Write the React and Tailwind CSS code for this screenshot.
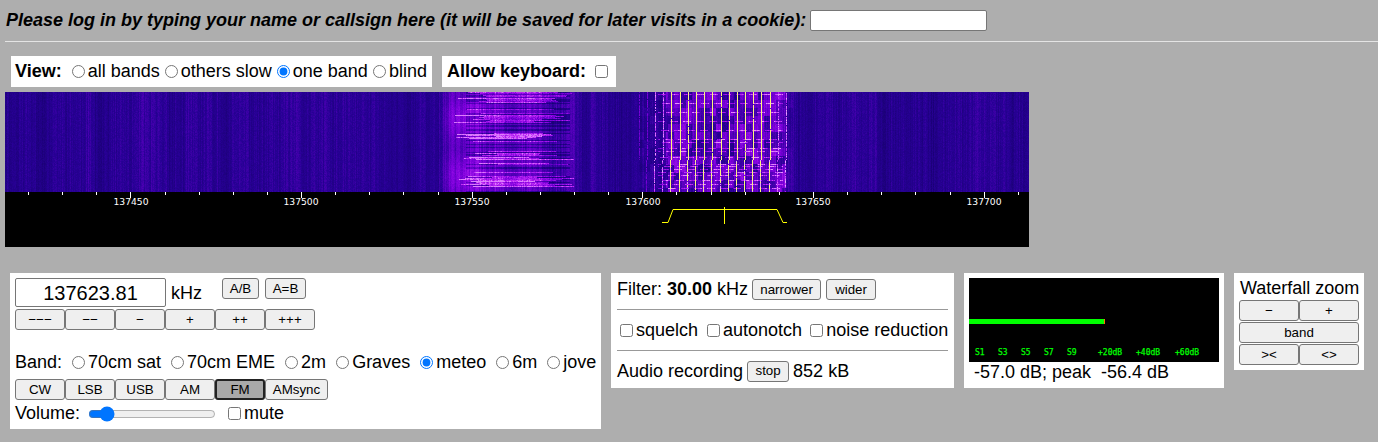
import { useEffect, useRef } from 'react'

const FONT = 'font-["Liberation_Sans",Arial,sans-serif]'

// seeded so the waterfall comes out the same on every load
function rng(seed) {
  let s = seed
  return () => {
    s = (s * 1664525 + 1013904223) >>> 0
    return s / 4294967296
  }
}

// level 0..1 -> colour, same ramp the websdr palette roughly follows
const STOPS = [
  [0, 14, 0, 90],
  [0.25, 40, 0, 150],
  [0.5, 125, 0, 220],
  [0.7, 190, 40, 245],
  [0.85, 235, 170, 255],
  [1, 255, 255, 110],
]

function colour(v) {
  const x = Math.max(0, Math.min(1, v))
  for (let i = 1; i < STOPS.length; i++) {
    if (x <= STOPS[i][0]) {
      const a = STOPS[i - 1], b = STOPS[i]
      const t = (x - a[0]) / (b[0] - a[0])
      return [a[1] + (b[1] - a[1]) * t, a[2] + (b[2] - a[2]) * t, a[3] + (b[3] - a[3]) * t]
    }
  }
  return STOPS[STOPS.length - 1].slice(1)
}

function drawWaterfall(c) {
  const W = 1024, H = 100
  const ctx = c.getContext('2d')
  const img = ctx.createImageData(W, H)
  const r = rng(11)

  // per-column gain gives the vertical streaks
  const col = []
  let drift = 0.5
  for (let x = 0; x < W; x++) {
    drift += (r() - 0.5) * 0.25 + (0.5 - drift) * 0.12
    col.push(drift * 0.7 + r() * 0.3)
  }

  // left signal: broken horizontal rows, canvas x 432..575
  const rows = []
  for (let y = 0; y < H; y++) {
    const cluster = Math.sin(y * 0.3 + 0.6) > -0.6
    rows.push({
      on: cluster && r() > 0.3,
      dark: r() > 0.55,
      a: 448 + r() * 45,
      b: 520 + r() * 50,
      v: 0.16 + r() * 0.16,
    })
  }

  // right signal: keyed carriers every 8.19px, canvas x 635..785
  const carriers = []
  for (let i = -2; i < 17; i++) carriers.push(Math.round(650 + i * 8.19))
  const lit = {}
  carriers.forEach((x, i) => {
    lit[x] = i > 3 && i < 17 ? 1 : i < 2 ? 0.45 : 0.75
  })
  const hl = []
  for (let y = 0; y < H; y++) {
    hl.push(y % 9 === 2 || (y % 9 === 5 && r() > 0.7) || (y > 68 && y % 8 === 0))
  }
  const blocks = []
  for (let i = 0; i < 120; i++) blocks.push(r())

  for (let y = 0; y < H; y++) {
    for (let x = 0; x < W; x++) {
      let v = 0.07 + col[x] * 0.26 + r() * 0.06

      if (x > 430 && x < 578) {
        const edge = Math.min(1, Math.min(x - 430, 578 - x) / 14)
        const glow = Math.max(0, 1 - Math.abs(x - 462) / 40) * (0.6 + 0.4 * Math.sin(y * 0.11 + 5))
        const row = rows[y]
        v += edge * (0.12 + 0.18 * glow + 0.08 * col[x])
        if (row.dark && x > 460 && x < 565) v -= 0.14
        if (row.on && x > row.a && x < row.b) v = Math.min(0.8, v + row.v + r() * 0.16)
      }

      if (x > 633 && x < 788) {
        const low = y > 67
        const px = low ? x + 1 : x
        const band = Math.floor((x - 633) / 6) + Math.floor(y / 8) * 13
        const centre = x > 660 && x < 780
        v += blocks[band % 120] * (centre ? 0.3 : 0.08)

        if (hl[y] && x > 652 && x < 778 && (x + y) % 13 > 4) v = Math.min(0.82, v + 0.2 + r() * 0.2)

        if (lit[px]) {
          const gap = r() > (lit[px] === 1 ? 0.97 : 0.85)
          if (!gap) {
            if (lit[px] === 1) v = low && r() > 0.75 ? 0.84 : 0.97 + r() * 0.03
            else v = Math.max(v, lit[px] * (0.85 + r() * 0.3))
          }
        }
      }

      const [R, G, B] = colour(v)
      const i = (y * W + x) * 4
      img.data[i] = R
      img.data[i + 1] = G
      img.data[i + 2] = B
      img.data[i + 3] = 255
    }
  }
  ctx.putImageData(img, 0, 0)
}

const LABELS = [
  [126, '137450'],
  [296, '137500'],
  [467, '137550'],
  [638, '137600'],
  [808, '137650'],
  [979, '137700'],
]

function Waterfall() {
  const ref = useRef(null)
  useEffect(() => {
    drawWaterfall(ref.current)
  }, [])
  const ticks = []
  for (let i = 0; i < 31; i++) ticks.push(23 + i * 34.13)
  return (
    <div className="ml-[5px] mt-[5px] w-[1024px]">
      <canvas ref={ref} width={1024} height={100} className="block" />
      <svg width="1024" height="55" className="block bg-black">
        {ticks.map((x, i) => (
          <line
            key={i}
            x1={Math.round(x) + 0.5}
            x2={Math.round(x) + 0.5}
            y1="0"
            y2={(i + 2) % 5 === 0 ? 6 : 3}
            stroke="#fff"
          />
        ))}
        {LABELS.map(([x, t]) => (
          <text key={t} x={x} y="13" textAnchor="middle" fill="#fff" fontSize="9.2" fontFamily="'DejaVu Sans',sans-serif">
            {t}
          </text>
        ))}
        <polyline
          points="657,30.5 663,30.5 668,17.5 772,17.5 778,30.5 782,30.5"
          fill="none"
          stroke="#ffff00"
        />
        <line x1="719.5" x2="719.5" y1="15" y2="32" stroke="#ffff00" />
      </svg>
    </div>
  )
}

function Btn({ className = 'bg-[#efefef] border border-[#767676]', width = '', children, ...rest }) {
  return (
    <button
      {...rest}
      className={'h-[21px] rounded-[3px] text-[13.33px] leading-none text-black text-center ' + width + ' ' + className}
    >
      {children}
    </button>
  )
}

function Radio({ label, checked, className = '' }) {
  return (
    <label className={'inline-flex items-center ' + className}>
      <input type="radio" defaultChecked={checked} className="w-[13px] h-[13px] mr-[3px]" />
      {label}
    </label>
  )
}

function Check({ label, className = '' }) {
  return (
    <label className={'inline-flex items-center ' + className}>
      <input type="checkbox" className="w-[13px] h-[13px] mr-[3px]" />
      {label}
    </label>
  )
}

const STEPS = ['−−−', '−−', '−', '+', '++', '+++']
const MODES = ['CW', 'LSB', 'USB', 'AM', 'FM']
const BANDS = ['70cm sat', '70cm EME', '2m', 'Graves', 'meteo', '6m', 'jove']

function FreqPanel() {
  return (
    <div className="w-[591px] h-[156px] bg-white px-[5px] pt-[5px]">
      <div className="flex items-start">
        <input
          type="text"
          readOnly
          value="137623.81"
          className="w-[151px] h-[29px] border border-[#767676] rounded-[2px] text-center text-[20px] text-black outline-none"
        />
        <span className="ml-[5px] mt-[4px] text-[18px] leading-[23px]">kHz</span>
        <Btn width="ml-[20px] w-[37px]">A/B</Btn>
        <Btn width="ml-[6px] w-[41px]">A=B</Btn>
      </div>
      <div className="flex mt-[2px]">
        {STEPS.map(s => (
          <Btn key={s} width="w-[50px]">{s}</Btn>
        ))}
      </div>
      <div className="flex items-center mt-[21px] h-[23px] text-[18px] whitespace-nowrap">
        <span>Band:</span>
        {BANDS.map(b => (
          <Radio key={b} label={b} checked={b === 'meteo'} className="ml-[10px]" />
        ))}
      </div>
      <div className="flex mt-[5px]">
        {MODES.map(m => (
          <Btn
            key={m}
            width="w-[50px]"
            className={m === 'FM' ? 'bg-[#a9a9a9] border-2 border-[#222]' : undefined}
          >
            {m}
          </Btn>
        ))}
        <Btn width="w-[63px]">AMsync</Btn>
      </div>
      <div className="flex items-center mt-[2px] h-[23px] text-[18px]">
        <span>Volume:</span>
        <input type="range" min="0" max="100" defaultValue="10" className="ml-[8px] w-[128px] h-[16px]" />
        <Check label="mute" className="ml-[12px]" />
      </div>
    </div>
  )
}

function FilterPanel() {
  return (
    <div className="w-[343px] h-[115px] bg-white px-[6px] pt-[5px] text-[18px]">
      <div className="flex items-center h-[23px] whitespace-pre">
        <span>Filter: <b>30.00</b> kHz</span>
        <Btn width="ml-[4px] w-[69px]">narrower</Btn>
        <Btn width="ml-[5px] w-[50px]">wider</Btn>
      </div>
      <hr className="mt-[8px] border-t border-[#999]" />
      <div className="flex items-center h-[40px] pl-[3px] whitespace-nowrap">
        <Check label="squelch" />
        <Check label="autonotch" className="ml-[9px]" />
        <Check label="noise reduction" className="ml-[8px]" />
      </div>
      <hr className="border-t border-[#999]" />
      <div className="flex items-center h-[40px] whitespace-nowrap">
        <span>Audio recording</span>
        <Btn width="ml-[4px] w-[42px]">stop</Btn>
        <span className="ml-[4px]">852 kB</span>
      </div>
    </div>
  )
}

const S_LABELS = [
  [6, 'S1'], [29, 'S3'], [52, 'S5'], [75, 'S7'], [98, 'S9'],
  [129, '+20dB'], [167, '+40dB'], [206, '+60dB'],
]

function MeterPanel() {
  return (
    <div className="w-[260px] h-[115px] bg-white pl-[5px] pt-[5px] text-[18px]">
      <svg width="250" height="84" className="block bg-black">
        <rect x="0" y="41" width="135" height="5" fill="#00ff00" />
        <rect x="135" y="41" width="1" height="5" fill="#ff6a00" />
        {S_LABELS.map(([x, t]) => (
          <text
            key={t}
            x={x}
            y="77"
            fill="#00ff00"
            stroke="#00ff00"
            strokeWidth="0.25"
            fontSize="8"
            fontFamily="'DejaVu Sans Mono',monospace"
          >
            {t}
          </text>
        ))}
      </svg>
      <div className="pl-[5px] leading-[21px] whitespace-pre">-57.0 dB; peak  -56.4 dB</div>
    </div>
  )
}

function ZoomPanel() {
  return (
    <div className="w-[130px] h-[97px] bg-white px-[5px] pt-[5px] text-[18px]">
      <div className="leading-[20px] h-[22px] pl-px whitespace-nowrap">Waterfall zoom</div>
      <div className="flex">
        <Btn width="w-[60px]">−</Btn>
        <Btn width="w-[60px]">+</Btn>
      </div>
      <Btn width="block w-[120px] mt-px">band</Btn>
      <div className="flex mt-px">
        <Btn width="w-[60px]">&gt;&lt;</Btn>
        <Btn width="w-[60px]">&lt;&gt;</Btn>
      </div>
    </div>
  )
}

export default function App() {
  return (
    <div className={FONT + ' h-[442px] bg-[#aeaeae] text-black overflow-hidden'}>
      <div className="flex items-center h-[41px] pl-[6px] pb-[1px]">
        <b className="italic text-[18px]">
          Please log in by typing your name or callsign here (it will be saved for later visits in a cookie):
        </b>
        <input type="text" className="ml-[4px] w-[177px] h-[21px] bg-white border border-[#767676] rounded-[2px]" />
      </div>
      <hr className="ml-[5px] border-t border-[#e4e4e4]" />
      <div className="flex gap-[10px] ml-[11px] mt-[14px] text-[18px]">
        <div className="flex items-center w-[421px] h-[31px] bg-white pl-[4px] whitespace-nowrap">
          <b className="mr-[10px]">View:</b>
          <Radio label="all bands" />
          <Radio label="others slow" className="ml-[5px]" />
          <Radio label="one band" checked className="ml-[5px]" />
          <Radio label="blind" className="ml-[5px]" />
        </div>
        <div className="flex items-center w-[174px] h-[31px] bg-white pl-[5px] whitespace-nowrap">
          <b>Allow keyboard:</b>
          <input type="checkbox" className="ml-[9px] w-[13px] h-[13px]" />
        </div>
      </div>
      <Waterfall />
      <div className="flex items-start gap-[10px] ml-[10px] mt-[26px]">
        <FreqPanel />
        <FilterPanel />
        <MeterPanel />
        <ZoomPanel />
      </div>
    </div>
  )
}
